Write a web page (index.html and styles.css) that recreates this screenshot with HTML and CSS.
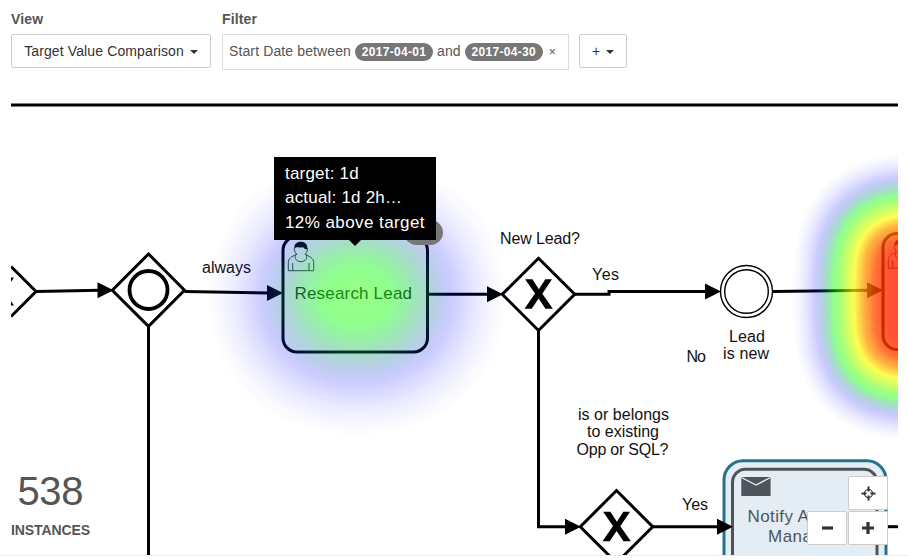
FILE: index.html
```html
<!DOCTYPE html>
<html lang="en">
<head>
<meta charset="utf-8">
<title>Process dashboard</title>
<link rel="stylesheet" href="styles.css">
</head>
<body>
<header class="toolbar">
  <div class="group">
    <div class="label">View</div>
    <button class="btn view-btn">Target Value Comparison<span class="caret"></span></button>
  </div>
  <div class="group">
    <div class="label">Filter</div>
    <div class="filter-row">
      <div class="filter-list">Start Date between <span class="pill">2017-04-01</span> and <span class="pill">2017-04-30</span><span class="remove">×</span></div>
      <button class="btn add-btn">+<span class="caret"></span></button>
    </div>
  </div>
</header>
<main class="stage">
<svg class="diagram" viewBox="11 103 887 452" width="887" height="452">
  <defs>
    <filter id="heatWarm" x="-60%" y="-60%" width="220%" height="220%" color-interpolation-filters="sRGB">
      <feGaussianBlur stdDeviation="25"/>
      <feColorMatrix values="0 0 0 1.07 -0.07  0 0 0 1.07 -0.07  0 0 0 1.07 -0.07  0 0 0 1.07 -0.07"/>
      <feComponentTransfer>
        <feFuncR type="table" tableValues="0 0 0 0 0 0 0 0 0 0 0 0 .167 .333 .5 .667 .833 1 1 1 1"/>
        <feFuncG type="table" tableValues="0 0 0 0 0 0 .167 .333 .5 .667 .833 1 1 1 1 1 1 1 .75 .5 .15"/>
        <feFuncB type="table" tableValues="1 1 1 1 1 1 .833 .667 .5 .333 .167 0 0 0 0 0 0 0 0 0 0"/>
        <feFuncA type="linear" slope=".8"/>
      </feComponentTransfer>
    </filter>
    <filter id="heatCool" x="-80%" y="-80%" width="260%" height="260%" color-interpolation-filters="sRGB">
      <feGaussianBlur stdDeviation="39"/>
      <feColorMatrix values="0 0 0 .64 -0.035  0 0 0 .64 -0.035  0 0 0 .64 -0.035  0 0 0 .64 -0.035"/>
      <feComponentTransfer>
        <feFuncR type="table" tableValues="0 0 0 0 0 0 0 0 0 0 0 0 .167 .333 .5 .667 .833 1 1 1 1"/>
        <feFuncG type="table" tableValues="0 0 0 0 0 0 .167 .333 .5 .667 .833 1 1 1 1 1 1 1 .75 .5 .15"/>
        <feFuncB type="table" tableValues="1 1 1 1 1 1 .833 .667 .5 .333 .167 0 0 0 0 0 0 0 0 0 0"/>
        <feFuncA type="linear" slope=".8"/>
      </feComponentTransfer>
    </filter>
    <path id="head" d="M0 0L-16 -8V8Z"/>
    <path id="cross" d="M-13.6 -14.7H-6.3L.2 -4.8L6.6 -14.7H13.3L3.6 -.3L14.2 14.7H6.8L-.1 4.4L-7 14.7H-14.2L-3.7 -.4Z"/>
    <g id="user">
      <path class="thin" d="M9 12.8C4 15 .6 17 .6 21V29.2H26V21C26 17 22 15 17.6 12.8M9 12.8C6 14.5 7.5 20 13.2 20.2C19 20 20.5 14.5 17.6 12.8M5 29V21.5M21.3 29V21.5M9 12.8C7 10.5 6.6 9 6.6 6.6M17.6 12.8C19.3 10.5 19.8 9 19.6 6.6"/>
      <path d="M6.6 7C6.5 2.5 9 .3 13 .3C17.2 .3 20 2.5 19.7 7.5C18 8.3 16.5 7.5 15.5 5.8C13 6.5 9 4.5 6.6 7Z"/>
    </g>
  </defs>

  <path class="line" d="M11 105H898"/>
  <g class="line">
    <path d="M11 266.5L36 291.5L11 316.5"/>
    <path d="M36 291.5L100 290.2"/>
    <path d="M148.5 254L184.5 290.2L148.5 326.4L112.3 290.2Z"/>
    <path d="M148.5 326V555"/>
    <path d="M184.5 291.5L270 292.9"/>
    <rect x="283" y="236.5" width="144.5" height="115.5" rx="14"/>
    <path d="M428 294.3H490"/>
    <path d="M538.5 258.3L574.7 294.3L538.5 330.5L502.3 294.3Z"/>
    <path d="M574.7 294.3H609V291.5H710"/>
    <path d="M773 291.5L870 290.2"/>
    <path d="M538.5 330V526.7H568"/>
    <path d="M616.5 490.5L652.7 526.7L616.5 562.9L580.3 526.7Z"/>
    <path d="M888 526.7H898"/>
    <rect x="883" y="233.5" width="144.5" height="116" rx="14"/>
  </g>
  <circle class="ring" cx="148.5" cy="290" r="19"/>
  <circle class="event" cx="746.5" cy="291.5" r="26"/>
  <circle class="event" cx="746.5" cy="291.5" r="21.8"/>
  <path d="M11 277.5H14L11 282ZM11 301L14 305.5H11Z"/>
  <use href="#cross" x="538.7" y="294"/>
  <use href="#cross" x="616.7" y="526.5"/>

  <rect class="notify-outer" x="724" y="460.8" width="162" height="130" rx="19"/>
  <rect class="notify-inner" x="732.5" y="469.3" width="144.5" height="115" rx="13"/>
  <path class="envelope" d="M741.3 477H770.6V496H741.3Z"/>
  <path class="flap" d="M741.5 477.5L756 485L770.5 477.5"/>
  <path class="line" d="M653 526.7H720"/>

  <use href="#head" x="113.5" y="290.2"/>
  <use href="#head" x="283" y="293"/>
  <use href="#head" x="503" y="294.3"/>
  <use href="#head" x="721" y="291.5"/>
  <use href="#head" x="883" y="290.2"/>
  <use href="#head" x="581" y="526.7"/>
  <use href="#head" x="733" y="526.7"/>
  <use href="#user" x="287.7" y="241.5"/>
  <use href="#user" x="887.7" y="239"/>

  <g class="text">
    <text x="202" y="273" textLength="49">always</text>
    <text x="294.5" y="299" textLength="117.5" class="task-text">Research Lead</text>
    <text x="500" y="243.5" textLength="80">New Lead?</text>
    <text x="592" y="280" textLength="27">Yes</text>
    <text x="729" y="342" textLength="36">Lead</text>
    <text x="723" y="359" textLength="46">is new</text>
    <text x="686.5" y="361.5" textLength="19.5">No</text>
    <text x="578" y="420" textLength="91">is or belongs</text>
    <text x="587" y="437" textLength="72">to existing</text>
    <text x="576.5" y="455" textLength="92">Opp or SQL?</text>
    <text x="682" y="510" textLength="26">Yes</text>
    <text x="747.5" y="522" textLength="114" class="notify-text">Notify Account</text>
    <text x="768" y="542" textLength="70" class="notify-text">Manager</text>
  </g>

  <rect x="259" y="212" width="196" height="170" rx="80" filter="url(#heatCool)"/>
  <rect x="828" y="188" width="255" height="218" rx="66" filter="url(#heatWarm)"/>
</svg>
<span class="badge"></span>
<div class="tooltip"><div class="tight">target: 1d</div><div class="tight">actual: 1d 2h…</div><div>12% above target</div></div>
<div class="count"><div class="number">538</div><div class="caption">INSTANCES</div></div>
<div class="controls">
  <button class="ctl reset"><svg width="15" height="15" viewBox="0 0 15 15"><circle cx="7.5" cy="7.5" r="4"/><path class="ticks" d="M7.5 .5V5.5M7.5 9.5V14.5M.5 7.5H5.5M9.5 7.5H14.5"/></svg></button>
  <button class="ctl"><svg width="13" height="13" viewBox="0 0 13 13"><path class="bold" d="M1 6H12"/></svg></button>
  <button class="ctl"><svg width="13" height="13" viewBox="0 0 13 13"><path class="bold" d="M0 6H12M6 0V12"/></svg></button>
</div>
</main>
</body>
</html>
```
FILE: styles.css
```css
* { box-sizing: border-box; }
body {
  margin: 0;
  width: 908px;
  height: 560px;
  overflow: hidden;
  background: #fff;
  color: #555;
  font: 14px/20px "Liberation Sans", Arial, sans-serif;
}
.toolbar { display: flex; gap: 11px; height: 103px; padding: 9px 11px 0; }
.label { height: 25px; font-weight: bold; letter-spacing: .15px; }
.filter-row { display: flex; gap: 10px; }
.btn {
  display: flex;
  align-items: center;
  justify-content: center;
  height: 34px;
  padding: 0;
  border: 1px solid #ccc;
  border-radius: 2px;
  background: #fff;
  color: #333;
  font: inherit;
}
.view-btn { width: 200px; letter-spacing: .12px; }
.add-btn { width: 48px; }
.caret {
  margin: 1px 0 0 6px;
  border: 4px solid transparent;
  border-top-color: #333;
  border-bottom: 0;
}
.filter-list {
  width: 347px;
  height: 36px;
  padding: 6px;
  border: 1px solid #ddd;
  white-space: nowrap;
  letter-spacing: .12px;
}
.pill {
  display: inline-block;
  width: 78px;
  height: 18px;
  border-radius: 9px;
  background: #777;
  color: #fff;
  font-size: 12px;
  font-weight: bold;
  line-height: 18px;
  letter-spacing: .3px;
  text-align: center;
}
.remove { margin-left: 6px; color: #2a6478; font-size: 12px; }
.stage {
  position: relative;
  width: 908px;
  height: 453px;
  padding-left: 11px;
  border-bottom: 1px solid #eee;
}
.diagram { display: block; overflow: hidden; }
.line { fill: none; stroke: #000; stroke-width: 3; }
.ring { fill: none; stroke: #000; stroke-width: 3.8; }
.event { fill: none; stroke: #000; stroke-width: 1.4; }
.thin { fill: none; stroke: #222; stroke-width: .9; }
.notify-outer { fill: #e4edf3; stroke: #27708f; stroke-width: 3; }
.notify-inner { fill: none; stroke: #4d5359; stroke-width: 3; }
.envelope { fill: #4d545c; }
.flap { fill: none; stroke: #e4edf3; stroke-width: 1.4; }
.text { font-size: 16px; fill: #111; }
.task-text { font-size: 17px; fill: #222; }
.notify-text { font-size: 17px; fill: #4d545c; }
.badge {
  position: absolute;
  left: 404px;
  top: 117px;
  width: 38.5px;
  height: 25px;
  border-radius: 13px;
  background: #777;
}
.tooltip {
  position: absolute;
  left: 274px;
  top: 54px;
  width: 162px;
  height: 83px;
  padding: 5px 11px;
  background: #000;
  color: #fff;
  font-size: 17px;
  line-height: 24.4px;
  letter-spacing: .42px;
  white-space: nowrap;
}
.tight { letter-spacing: .2px; }
.tooltip::after {
  content: "";
  position: absolute;
  left: 74px;
  top: 82px;
  border: 7px solid transparent;
  border-top-color: #000;
  border-bottom: 0;
}
.count { position: absolute; left: 11px; bottom: 15px; }
.number { padding-left: 6.5px; font-size: 40px; line-height: 46px; letter-spacing: -.4px; }
.caption { margin-top: 6px; font-size: 14px; font-weight: bold; line-height: 20px; letter-spacing: -.1px; }
.controls {
  position: absolute;
  right: 20px;
  bottom: 10px;
  display: grid;
  grid-template-columns: 40px 40px;
  gap: 1px;
}
.ctl {
  display: flex;
  align-items: center;
  justify-content: center;
  height: 34px;
  padding: 0;
  border: 1px solid #ccc;
  border-radius: 2px;
  background: #fff;
}
.reset { grid-column: 2; }
.ctl svg { fill: none; stroke: #333; stroke-width: 1.2; }
.ctl .ticks { stroke-width: 2; }
.ctl .bold { stroke-width: 3.2; }
```
